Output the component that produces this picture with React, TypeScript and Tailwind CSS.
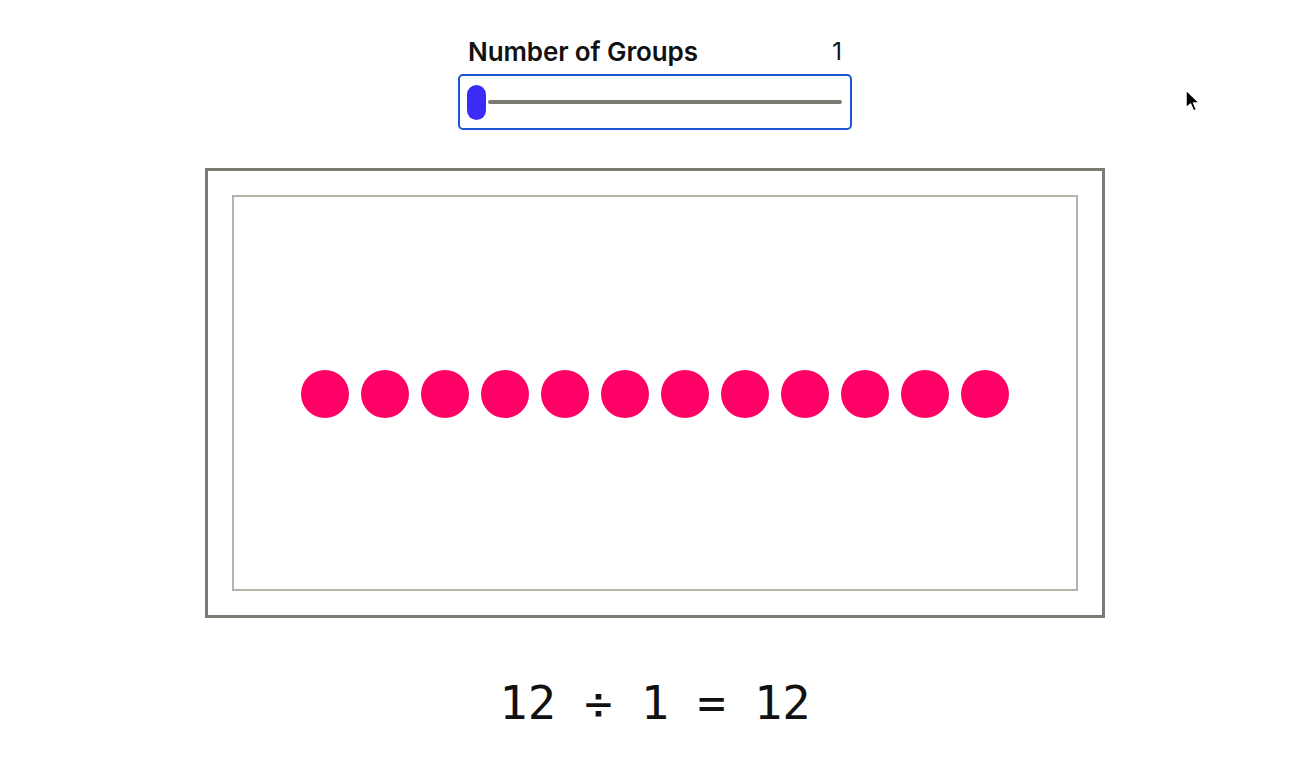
import React from "react";

const DOTS = Array.from({ length: 12 }, (_, i) => i);

function Cursor() {
  return (
    <svg
      className="absolute left-[1183px] top-[88px]"
      width="20"
      height="28"
      viewBox="0 0 20 28"
    >
      <path
        d="M3 2 L3 20 L7.5 16 L10.5 23 L13.5 21.8 L10.6 15 L16.5 15 Z"
        fill="#000"
        stroke="#fff"
        strokeWidth="1.5"
        strokeLinejoin="round"
      />
    </svg>
  );
}

export default function App() {
  return (
    <div className="relative w-[1306px] h-[778px] bg-white overflow-hidden">
      <div className="flex flex-col items-center pl-[4px] pt-[36px]">
        <div className="w-[394px]">
          <div
            className="flex justify-between items-end px-[10px] leading-[32px] text-[#111]"
            style={{ fontFamily: "Inter, 'Noto Sans', sans-serif" }}
          >
            <span className="text-[26px] font-semibold tracking-[-0.1px]">Number of Groups</span>
            <span className="text-[24px] font-normal">1</span>
          </div>
          <div className="mt-[6px] h-[56px] border-2 border-[#1a55d6] rounded-[5px] flex items-center pl-[7px] pr-[8px]">
            <div className="w-[19px] h-[35px] rounded-full bg-[#3a2cf6] shrink-0" />
            <div className="ml-[2px] flex-1 h-[4px] rounded-full bg-[#7a7a72]" />
          </div>
        </div>

        <div className="mt-[38px] w-[900px] h-[450px] border-[3px] border-[#7b7b73] p-[24px]">
          <div className="w-full h-full border-2 border-[#b4b4ab] flex items-center justify-center">
            <div className="flex gap-[12px] mt-[2px] mr-[1px]">
              {DOTS.map((i) => (
                <div key={i} className="w-[48px] h-[48px] rounded-full bg-[#ff0066]" />
              ))}
            </div>
          </div>
        </div>

        <div
          className="mt-[57px] text-[47px] leading-[56px] text-[#111] whitespace-pre"
          style={{ fontFamily: "'DejaVu Sans Mono', 'Liberation Mono', monospace" }}
        >
          12 ÷ 1 = 12
        </div>
      </div>
      <Cursor />
    </div>
  );
}
